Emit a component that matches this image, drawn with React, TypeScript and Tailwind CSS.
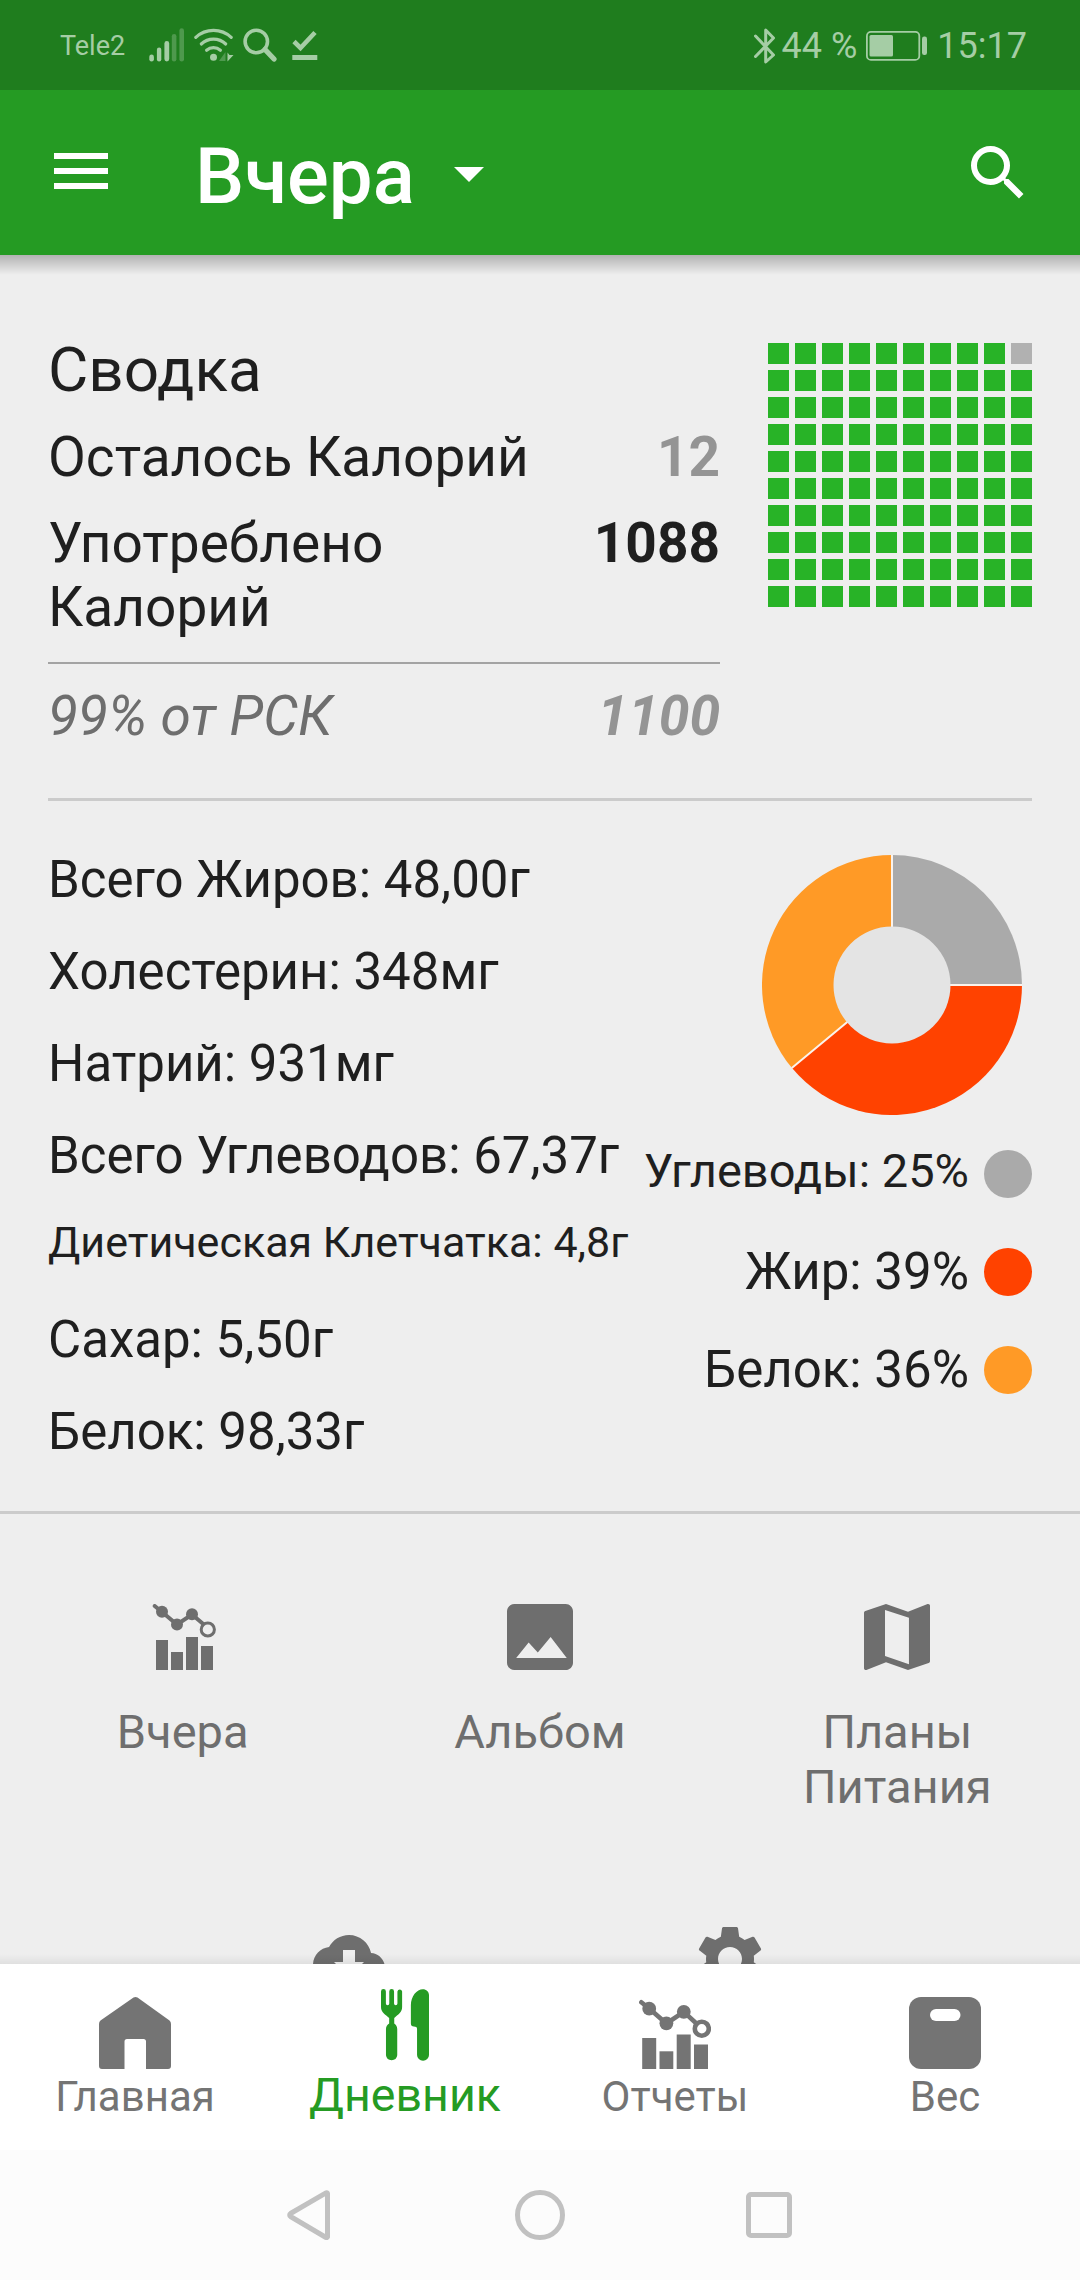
import React from "react";

const statusTint = "#a5cda5";

function SignalIcon() {
  return (
    <svg width="36" height="34" viewBox="0 0 36 34" fill={statusTint}>
      <rect x="0.3" y="26.5" width="4.6" height="7" rx="2.3" />
      <rect x="7.9" y="19.5" width="4.4" height="14" rx="2.2" />
      <rect x="15.4" y="13" width="4.8" height="20.5" rx="2.4" />
      <g opacity="0.35">
        <rect x="22.8" y="6" width="4.6" height="27.5" rx="2.3" />
        <rect x="30.4" y="0.3" width="4.6" height="33.2" rx="2.3" />
      </g>
    </svg>
  );
}

function WifiIcon() {
  return (
    <svg width="40" height="34" viewBox="0 0 40 34" fill="none" stroke={statusTint} strokeWidth="3.2" strokeLinecap="round">
      <path d="M1.8 9.3a26 26 0 0 1 35.4 0" />
      <path d="M7.3 16a17.5 17.5 0 0 1 24.4 0" />
      <path d="M12.6 22.2a10.5 10.5 0 0 1 13.8 0" />
      <circle cx="19.5" cy="29.2" r="3.5" fill={statusTint} stroke="none" />
      <path d="M31.5 24v9h-6.5z" fill="#4f9a4f" stroke="none" />
      <path d="M33.5 24.5v9l6-6.5h-4z" fill={statusTint} stroke="none" />
    </svg>
  );
}

function StatusSearchIcon() {
  return (
    <svg width="34" height="34" viewBox="0 0 34 34" fill="none" stroke={statusTint}>
      <circle cx="13.3" cy="13.5" r="11.2" strokeWidth="3.6" />
      <path d="M22 21.5l9 9.5" strokeWidth="5.2" strokeLinecap="round" />
    </svg>
  );
}

function StatusCheckIcon() {
  return (
    <svg width="26" height="32" viewBox="0 0 26 32" fill="none" stroke={statusTint}>
      <path d="M2 11.5l6.5 6.5L23 2.5" strokeWidth="4.6" />
      <path d="M0.3 27.5h25" strokeWidth="5" />
    </svg>
  );
}

function BluetoothIcon() {
  return (
    <svg width="22" height="36" viewBox="0 0 22 36" fill="none" stroke={statusTint} strokeWidth="3" strokeLinejoin="round" strokeLinecap="round">
      <path d="M1.5 8l18 19-7.8 7V2l7.8 8L1.500 28.500" />
    </svg>
  );
}

function BatteryIcon() {
  return (
    <svg width="62" height="30" viewBox="0 0 62 30" fill="none">
      <rect x="0.9" y="0.9" width="52.4" height="28" rx="4" stroke={statusTint} strokeWidth="1.8" />
      <rect x="3.5" y="4" width="23.5" height="21.5" rx="1.5" fill={statusTint} />
      <rect x="56" y="5.5" width="5" height="18.5" rx="2.2" fill={statusTint} />
    </svg>
  );
}

function StatusBar() {
  return (
    <div className="flex h-[90px] items-start bg-[#1f7d1e] pl-[60px] pr-[53px] text-[#a5cda5]">
      <span className="mt-[30px] w-[89px] text-[27px] leading-[32px]">Tele2</span>
      <div className="mt-[28px] w-[45px]"><SignalIcon /></div>
      <div className="mt-[28px] w-[49px]"><WifiIcon /></div>
      <div className="mt-[28px] w-[49px]"><StatusSearchIcon /></div>
      <div className="mt-[30px]"><StatusCheckIcon /></div>
      <div className="ml-auto flex items-start">
        <div className="mt-[28px]"><BluetoothIcon /></div>
        <span className="ml-[6px] mt-[25px] whitespace-nowrap text-[36px] leading-[43px]">44 %</span>
        <div className="ml-[9px] mt-[31px]"><BatteryIcon /></div>
        <span className="ml-[9px] mt-[25px] text-[36px] leading-[43px]">15:17</span>
      </div>
    </div>
  );
}

function Header() {
  return (
    <header className="flex h-[165px] items-start bg-[#259b23] pl-[54px] pr-[46px] text-white">
      <div className="mt-[63px] flex w-[54px] flex-col gap-[9px]">
        <span className="h-[6px] bg-white" />
        <span className="h-[6px] bg-white" />
        <span className="h-[6px] bg-white" />
      </div>
      <h1 className="ml-[87px] mt-[41px] w-[259px] text-[78px] font-medium leading-[92px]">Вчера</h1>
      <svg className="mt-[77px]" width="30" height="15" viewBox="0 0 30 15">
        <path d="M0 0h30L15 15z" fill="#fff" />
      </svg>
      <svg className="ml-auto mt-[47px]" width="72" height="72" viewBox="0 0 24 24" fill="#fff">
        <path d="M15.5 14h-.79l-.28-.27A6.471 6.471 0 0 0 16 9.5 6.5 6.5 0 1 0 9.5 16c1.61 0 3.09-.59 4.23-1.57l.27.28v.79l5 4.99L20.49 19l-4.99-5zm-6 0C7.01 14 5 11.99 5 9.5S7.01 5 9.5 5 14 7.01 14 9.5 11.99 14 9.5 14z" />
      </svg>
    </header>
  );
}

function SquareGrid() {
  return (
    <div className="mt-[7px] grid h-[264px] w-[264px] grid-cols-10 gap-[6px]">
      {Array.from({ length: 100 }, (_, i) => (
        <span key={i} className={i === 9 ? "bg-[#b1b1b1]" : "bg-[#28b327]"} />
      ))}
    </div>
  );
}

function Summary() {
  return (
    <section className="px-12 pt-[81px]">
      <div className="flex justify-between">
        <div className="w-[672px] text-[55px] leading-[64px]">
          <h2 className="-mt-px text-[62px] leading-[70px]">Сводка</h2>
          <div className="mt-[20px] flex justify-between">
            <span>Осталось Калорий</span>
            <b className="font-bold text-[#949494]">12</b>
          </div>
          <div className="mt-[22px] flex justify-between">
            <span className="w-[420px]">Употреблено Калорий</span>
            <b className="font-bold">1088</b>
          </div>
          <div className="mt-[23px] h-[2px] bg-[#a3a3a3]" />
          <div className="mt-[20px] flex justify-between italic text-[#6e6e6e]">
            <span>99% от РСК</span>
            <b className="font-bold text-[#949494]">1100</b>
          </div>
        </div>
        <SquareGrid />
      </div>
      <div className="mt-[50px] h-[3px] bg-[#cbcbcb]" />
    </section>
  );
}

function arc(from: number, to: number) {
  const point = (f: number, r: number) => {
    const a = f * Math.PI * 2;
    return `${(130 + r * Math.sin(a)).toFixed(2)} ${(130 - r * Math.cos(a)).toFixed(2)}`;
  };
  return `M130 130L${point(from, 130)}A130 130 0 0 1 ${point(to, 130)}Z`;
}

function Donut() {
  return (
    <svg width="260" height="260" viewBox="0 0 260 260">
      <path d={arc(0, 0.25)} fill="#aaaaaa" />
      <path d={arc(0.25, 0.64)} fill="#ff4200" />
      <path d={arc(0.64, 1)} fill="#ff9a26" />
      <path d="M130 0V130H260M130 130L29.8 212.9" stroke="#fbf3ec" strokeWidth="2" fill="none" />
      <circle cx="130" cy="130" r="58.5" fill="#e4e4e4" />
    </svg>
  );
}

function Nutrition() {
  return (
    <section className="flex h-[710px] justify-between pl-12 pr-12 text-[51px]">
      <div className="mt-[33px] whitespace-nowrap">
        <div className="flex h-[92px] items-center">Всего Жиров: 48,00г</div>
        <div className="flex h-[92px] items-center">Холестерин: 348мг</div>
        <div className="flex h-[92px] items-center">Натрий: 931мг</div>
        <div className="flex h-[92px] items-center">Всего Углеводов: 67,37г</div>
        <div className="mb-[11px] flex h-[81px] items-center text-[43px]">Диетическая Клетчатка: 4,8г</div>
        <div className="flex h-[92px] items-center">Сахар: 5,50г</div>
        <div className="flex h-[92px] items-center">Белок: 98,33г</div>
      </div>
      <div className="mt-[54px] flex flex-col items-end whitespace-nowrap">
        <div className="mb-[10px] mr-[10px]"><Donut /></div>
        <div className="flex h-[98px] items-center">
          <span className="pb-[6px] text-[47px]">Углеводы: 25%</span>
          <span className="ml-[15px] size-12 rounded-full bg-[#aaaaaa]" />
        </div>
        <div className="flex h-[98px] items-center">
          <span>Жир: 39%</span>
          <span className="ml-[15px] size-12 rounded-full bg-[#ff4200]" />
        </div>
        <div className="flex h-[98px] items-center">
          <span>Белок: 36%</span>
          <span className="ml-[15px] size-12 rounded-full bg-[#ff9a26]" />
        </div>
      </div>
    </section>
  );
}

function SmallChartIcon() {
  return (
    <svg width="66" height="66" viewBox="0 0 66 66" fill="#6e6e6e">
      <rect x="6" y="36" width="12" height="30" />
      <rect x="21" y="48" width="12" height="18" />
      <rect x="36" y="33" width="12" height="33" />
      <rect x="51" y="42" width="12" height="24" />
      <path d="M4.7 2L12 8l15 12.5L42 10.5l13 11" fill="none" stroke="#6e6e6e" strokeWidth="4" strokeLinecap="round" />
      <circle cx="12" cy="7.8" r="6" />
      <circle cx="27" cy="20.5" r="6" />
      <circle cx="42" cy="10.3" r="6" />
      <circle cx="57.8" cy="25.5" r="6.6" fill="#eeeeee" stroke="#6e6e6e" strokeWidth="3" />
    </svg>
  );
}

function PhotoIcon() {
  return (
    <svg width="66" height="66" viewBox="3 3 18 18" fill="#6e6e6e">
      <path d="M21 19V5c0-1.1-.9-2-2-2H5c-1.1 0-2 .9-2 2v14c0 1.1.9 2 2 2h14c1.1 0 2-.9 2-2zM5.500 17.700l3.400-4.200 2.500 2.700 3.500-4.200 4.400 5.700z" />
    </svg>
  );
}

function MapIcon() {
  return (
    <svg width="66" height="66" viewBox="3 3 18 18" fill="#6e6e6e">
      <path d="M20.5 3l-.16.03L15 5.1 9 3 3.360 4.900c-.21.07-.36.25-.36.480V20.500c0 .28.22.5.5.5l.16-.03L9 18.900l6 2.100 5.640-1.900c.21-.07.36-.25.36-.480V3.500c0-.28-.22-.5-.5-.5zM15.260 19.400L8.730 17.150V4.650l6.530 2.130z" />
    </svg>
  );
}

function Actions() {
  return (
    <section className="text-[47px] leading-[55px] text-[#6e6e6e]">
      <div className="grid grid-cols-3 px-1 pt-[90px] text-center">
        <div className="flex flex-col items-center gap-[34px]"><SmallChartIcon />Вчера</div>
        <div className="flex flex-col items-center gap-[34px]"><PhotoIcon />Альбом</div>
        <div className="flex flex-col items-center gap-[34px]">
          <MapIcon />
          <span>Планы<br />Питания</span>
        </div>
      </div>
      <div className="mt-[105px] flex justify-center pr-[2px]">
        <div className="flex w-[381px] justify-center pt-[4px]">
          <svg width="72" height="72" viewBox="0 0 24 24" fill="#6e6e6e">
            <path d="M19.35 10.04C18.67 6.59 15.64 4 12 4 9.11 4 6.6 5.64 5.35 8.04 2.34 8.36 0 10.91 0 14c0 3.31 2.69 6 6 6h13c2.76 0 5-2.24 5-5 0-2.64-2.05-4.78-4.65-4.96zM17 13l-5 5-5-5h3V9h4v4h3z" />
          </svg>
        </div>
        <div className="flex w-[381px] justify-center">
          <svg width="80" height="80" viewBox="0 0 24 24" fill="#6e6e6e">
            <path d="M19.14 12.94c.04-.3.06-.61.06-.94 0-.32-.02-.64-.07-.94l2.03-1.58c.18-.14.23-.41.12-.61l-1.92-3.32c-.12-.22-.37-.29-.59-.22l-2.39.96c-.5-.38-1.03-.7-1.62-.94l-.36-2.54c-.04-.24-.24-.41-.48-.41h-3.84c-.24 0-.43.17-.47.41l-.36 2.54c-.59.24-1.13.57-1.62.94l-2.39-.96c-.22-.08-.47 0-.59.22L2.74 8.87c-.12.21-.08.47.12.61l2.03 1.58c-.05.3-.09.63-.09.94s.02.64.07.94l-2.03 1.58c-.18.14-.23.41-.12.61l1.92 3.32c.12.22.37.29.59.22l2.39-.96c.5.38 1.03.7 1.62.94l.36 2.54c.05.24.24.41.48.41h3.84c.24 0 .44-.17.47-.41l.36-2.54c.59-.24 1.13-.56 1.62-.94l2.39.96c.22.08.47 0 .59-.22l1.92-3.32c.12-.22.07-.47-.12-.61l-2.01-1.58zM12 15.6c-1.98 0-3.6-1.62-3.6-3.6s1.62-3.6 3.6-3.6 3.6 1.62 3.6 3.6-1.62 3.6-3.6 3.6z" />
          </svg>
        </div>
      </div>
    </section>
  );
}

function HomeIcon() {
  return (
    <svg width="72" height="72" viewBox="0 0 72 72" fill="#747474">
      <path d="M34.500 0.600Q36.500-0.600 38.500 0.600L70.500 23.500Q72 24.700 72 27V69Q72 72 69 72H47V44.500Q47 42 44.500 42H28Q25.500 42 25.500 44.500V72H3Q0 72 0 69V27Q0 24.700 1.500 23.500Z" />
    </svg>
  );
}

function CutleryIcon() {
  return (
    <svg width="48" height="72" viewBox="0 0 48.2 72" fill="#259b23">
      <path d="M0 2.300a2.400 2.400 0 0 1 4.900 0V14.500a1.700 1.700 0 0 0 3.400 0V2.300a2.400 2.400 0 0 1 4.800 0V14.500a1.700 1.700 0 0 0 3.400 0V2.300a2.400 2.400 0 0 1 4.700 0V18C21.200 23.500 17 25.500 13.300 29V34.500C15 35.500 16.300 37.500 16.300 40V66.500a5.700 5.700 0 0 1-11.300 0V40C5 37.500 6.300 35.500 8.200 34.500V29C4.500 25.500 0 23.500 0 18Z" />
      <path d="M42 0C45.500 0 48.200 2.500 48.200 6V66a6 6 0 0 1-12 0V40C36.200 38 35 37.800 33 37.600C31 37.400 30 36.500 30 34.500V16C30 7 36 0 42 0Z" />
    </svg>
  );
}

function ChartIcon() {
  return (
    <svg width="72" height="72" viewBox="0 0 72 72" fill="#747474">
      <rect x="3.200" y="41" width="14" height="31" />
      <rect x="20.500" y="54.300" width="13.800" height="17.700" />
      <rect x="37.700" y="37.500" width="14" height="34.500" />
      <rect x="55" y="47.500" width="14" height="24.500" />
      <path d="M2.300 5.300L10.200 11.500 27.400 26.500 44.800 14.800 58.500 27.500" fill="none" stroke="#747474" strokeWidth="4.600" strokeLinecap="round" />
      <circle cx="10.200" cy="11.700" r="6.900" />
      <circle cx="27.400" cy="26.300" r="6.900" />
      <circle cx="44.800" cy="14.800" r="6.900" />
      <circle cx="62.800" cy="31.700" r="7" fill="#fff" stroke="#747474" strokeWidth="4.600" />
    </svg>
  );
}

function ScaleIcon() {
  return (
    <svg width="72" height="72" viewBox="0 0 72 72">
      <rect width="72" height="72" rx="12" fill="#747474" />
      <rect x="21" y="12" width="30.500" height="12" rx="6" fill="#fff" />
    </svg>
  );
}

function BottomNav() {
  return (
    <nav className="grid h-[186px] grid-cols-4 bg-white text-[42px] leading-[50px] text-[#747474]">
      <div className="flex flex-col items-center gap-[3px] pt-[33px]"><HomeIcon />Главная</div>
      <div className="flex flex-col items-center gap-[6px] pt-[25px] text-[46.5px] leading-[56px] text-[#259b23]">
        <CutleryIcon />
        Дневник
      </div>
      <div className="flex flex-col items-center gap-[3px] pt-[33px]"><ChartIcon />Отчеты</div>
      <div className="flex flex-col items-center gap-[3px] pt-[33px]"><ScaleIcon />Вес</div>
    </nav>
  );
}

function SystemBar() {
  return (
    <div className="flex h-[130px] items-center bg-[#fcfcfc] pl-[286px]">
      <svg width="46" height="50" viewBox="0 0 46 50" fill="none" stroke="#c1c1c1" strokeWidth="5" strokeLinejoin="round">
        <path d="M41.500 3.500v43.500a1 1 0 0 1-1.500 0.500L4.500 26.500a1.800 1.800 0 0 1 0-3L40 2.800a1 1 0 0 1 1.500 0.700z" />
      </svg>
      <span className="ml-[183px] size-[50px] rounded-full border-[5px] border-[#c1c1c1]" />
      <span className="ml-[181px] size-[46px] rounded-[5px] border-[5px] border-[#c1c1c1]" />
    </div>
  );
}

export default function App() {
  return (
    <div className="h-[2280px] w-[1080px] overflow-hidden bg-[#eeeeee] font-['Roboto',sans-serif] text-[#1f1f1f]">
      <StatusBar />
      <Header />
      <main className="relative h-[1709px] overflow-hidden">
        <div className="absolute inset-x-0 top-0 h-[20px] bg-linear-to-b from-black/25 to-transparent" />
        <Summary />
        <Nutrition />
        <div className="h-[3px] bg-[#cbcbcb]" />
        <Actions />
        <div className="absolute inset-x-0 bottom-0 h-[10px] bg-linear-to-b from-transparent to-black/6" />
      </main>
      <BottomNav />
      <SystemBar />
    </div>
  );
}
